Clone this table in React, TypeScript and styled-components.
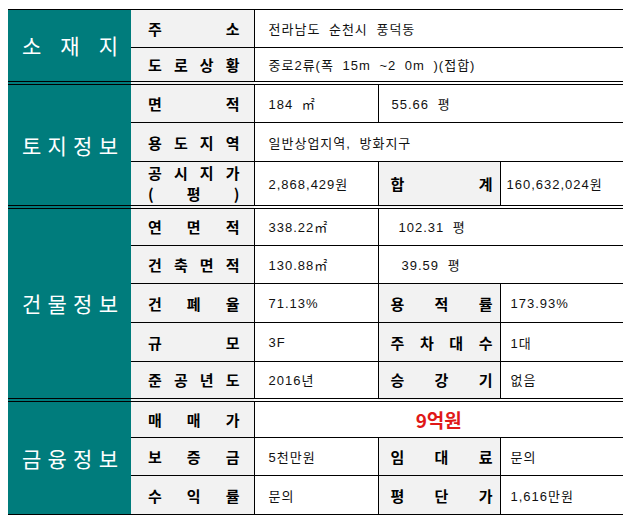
import styled, { createGlobalStyle } from 'styled-components';

const GlobalStyle = createGlobalStyle`
  body {
    margin: 0;
    background: #ffffff;
    font-family: "Liberation Sans", "Noto Sans CJK KR", sans-serif;
    color: #111111;
  }
`;

const Page = styled.div`
  padding: 9px 13px 0 8px;
`;

const InfoTable = styled.table`
  border-collapse: collapse;
  table-layout: fixed;
  width: 615px;
  border-top: 1px solid #000;
  border-bottom: 1px solid #000;
`;

const Row = styled.tr<{ $h: number; $divider?: boolean }>`
  height: ${(p) => p.$h}px;
  & > td {
    border-top: ${(p) => (p.$divider ? '4px double #000' : '1px solid #000')};
  }
`;

const SectionHead = styled.td`
  background: #007c7c;
  color: #ffffff;
  font-family: "Noto Sans CJK KR", sans-serif;
  font-size: 21px;
  padding: 0 13px 0 14px;
  vertical-align: middle;
`;

const LabelCell = styled.td<{ $inner?: boolean }>`
  background: #f2f2f2;
  font-family: "Noto Sans CJK KR", sans-serif;
  font-weight: 700;
  font-size: 15px;
  line-height: 21px;
  color: #000;
  padding: ${(p) => (p.$inner ? '0 7px 0 12px' : '0 14px 0 17px')};
  border-left: ${(p) => (p.$inner ? '1px solid #000' : 'none')};
  border-right: 1px solid #000;
  vertical-align: middle;
`;

const ValueCell = styled.td<{ $pad?: number; $split?: boolean }>`
  font-size: 13px;
  letter-spacing: 1px;
  word-spacing: 4px;
  padding-left: ${(p) => p.$pad ?? 14}px;
  border-right: ${(p) => (p.$split ? '1px solid #000' : 'none')};
  vertical-align: middle;
  white-space: pre;
`;

const PriceCell = styled.td`
  text-align: center;
  font-family: "Noto Sans CJK KR", sans-serif;
  font-weight: 700;
  font-size: 19px;
  color: #e01818;
  vertical-align: middle;
`;

const SpreadLine = styled.div`
  display: flex;
  justify-content: space-between;
`;

const Spread = ({ text }: { text: string }) => (
  <SpreadLine>
    {text.split('').map((c, i) => (
      <span key={i}>{c}</span>
    ))}
  </SpreadLine>
);

export default function App() {
  return (
    <Page>
      <GlobalStyle />
      <InfoTable>
        <colgroup>
          <col style={{ width: 123 }} />
          <col style={{ width: 123 }} />
          <col style={{ width: 124 }} />
          <col style={{ width: 122 }} />
          <col style={{ width: 123 }} />
        </colgroup>
        <tbody>
          <Row $h={38}>
            <SectionHead rowSpan={2}>
              <Spread text="소재지" />
            </SectionHead>
            <LabelCell>
              <Spread text="주소" />
            </LabelCell>
            <ValueCell colSpan={3}>전라남도 순천시 풍덕동</ValueCell>
          </Row>
          <Row $h={35}>
            <LabelCell>
              <Spread text="도로상황" />
            </LabelCell>
            <ValueCell colSpan={3}>중로2류(폭 15m ~2 0m )(접합)</ValueCell>
          </Row>

          <Row $h={40} $divider>
            <SectionHead rowSpan={3}>
              <Spread text="토지정보" />
            </SectionHead>
            <LabelCell>
              <Spread text="면적" />
            </LabelCell>
            <ValueCell $split>184 ㎡</ValueCell>
            <ValueCell colSpan={2} $pad={13}>55.66 평</ValueCell>
          </Row>
          <Row $h={39}>
            <LabelCell>
              <Spread text="용도지역" />
            </LabelCell>
            <ValueCell colSpan={3}>일반상업지역, 방화지구</ValueCell>
          </Row>
          <Row $h={45}>
            <LabelCell>
              <Spread text="공시지가" />
              <Spread text="(평)" />
            </LabelCell>
            <ValueCell>2,868,429원</ValueCell>
            <LabelCell $inner>
              <Spread text="합계" />
            </LabelCell>
            <ValueCell $pad={6}>160,632,024원</ValueCell>
          </Row>

          <Row $h={39} $divider>
            <SectionHead rowSpan={5}>
              <Spread text="건물정보" />
            </SectionHead>
            <LabelCell>
              <Spread text="연면적" />
            </LabelCell>
            <ValueCell $split>338.22㎡</ValueCell>
            <ValueCell colSpan={2} $pad={20}>102.31 평</ValueCell>
          </Row>
          <Row $h={38}>
            <LabelCell>
              <Spread text="건축면적" />
            </LabelCell>
            <ValueCell $split>130.88㎡</ValueCell>
            <ValueCell colSpan={2} $pad={23}>39.59 평</ValueCell>
          </Row>
          <Row $h={39}>
            <LabelCell>
              <Spread text="건폐율" />
            </LabelCell>
            <ValueCell>71.13%</ValueCell>
            <LabelCell $inner>
              <Spread text="용적률" />
            </LabelCell>
            <ValueCell $pad={10}>173.93%</ValueCell>
          </Row>
          <Row $h={39}>
            <LabelCell>
              <Spread text="규모" />
            </LabelCell>
            <ValueCell>3F</ValueCell>
            <LabelCell $inner>
              <Spread text="주차대수" />
            </LabelCell>
            <ValueCell $pad={10}>1대</ValueCell>
          </Row>
          <Row $h={38}>
            <LabelCell>
              <Spread text="준공년도" />
            </LabelCell>
            <ValueCell>2016년</ValueCell>
            <LabelCell $inner>
              <Spread text="승강기" />
            </LabelCell>
            <ValueCell $pad={10}>없음</ValueCell>
          </Row>

          <Row $h={38} $divider>
            <SectionHead rowSpan={3}>
              <Spread text="금융정보" />
            </SectionHead>
            <LabelCell>
              <Spread text="매매가" />
            </LabelCell>
            <PriceCell colSpan={3}>9억원</PriceCell>
          </Row>
          <Row $h={38}>
            <LabelCell>
              <Spread text="보증금" />
            </LabelCell>
            <ValueCell>5천만원</ValueCell>
            <LabelCell $inner>
              <Spread text="임대료" />
            </LabelCell>
            <ValueCell $pad={10}>문의</ValueCell>
          </Row>
          <Row $h={39}>
            <LabelCell>
              <Spread text="수익률" />
            </LabelCell>
            <ValueCell>문의</ValueCell>
            <LabelCell $inner>
              <Spread text="평단가" />
            </LabelCell>
            <ValueCell $pad={10}>1,616만원</ValueCell>
          </Row>
        </tbody>
      </InfoTable>
    </Page>
  );
}
